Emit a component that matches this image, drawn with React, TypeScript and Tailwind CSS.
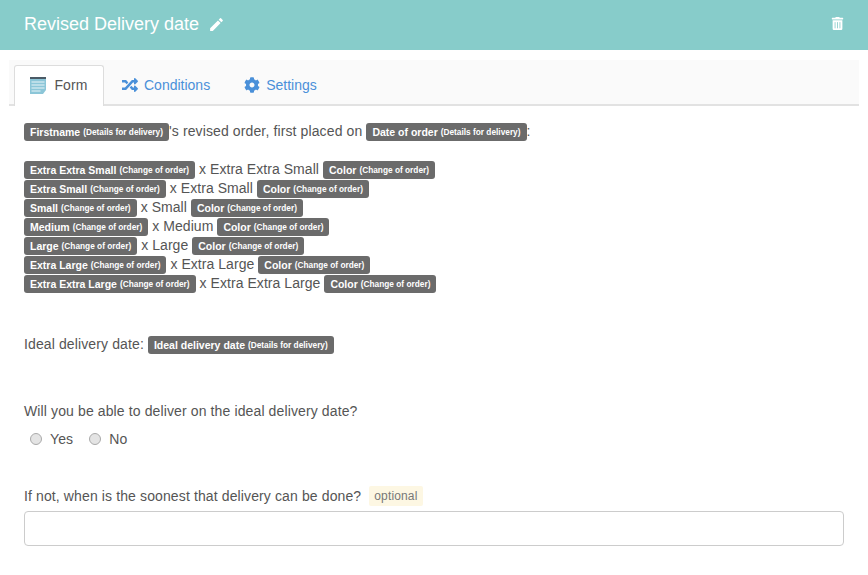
import React from 'react'
import { FaRandom, FaCog, FaTrashAlt } from 'react-icons/fa'
import { MdEdit } from 'react-icons/md'

const sizes = ['Extra Extra Small', 'Extra Small', 'Small', 'Medium', 'Large', 'Extra Large', 'Extra Extra Large']

const Tag = ({ name, group }: { name: string; group: string }) => (
  <span className="inline-flex h-[18px] items-center whitespace-nowrap rounded-[3px] bg-[#6b6b6b] px-[6px] pt-px text-[10.5px] font-bold leading-none tracking-normal text-white">
    {name}
    <span className="ml-[3px] text-[8.3px]">({group})</span>
  </span>
)

const FormIcon = () => (
  <svg width="16" height="17" viewBox="0 0 16 17">
    <rect x="0" y="0" width="16" height="2" fill="#4a5a66" />
    <path d="M0 2h16v11l-3 4H0z" fill="#8cc6d8" />
    <path d="M1.5 5h13M1.5 8h13M1.5 11h13M1.5 14h9" stroke="#eaf5f8" strokeWidth="1" />
  </svg>
)

export default function App() {
  return (
    <div className="h-[575px] w-[868px] overflow-hidden bg-white font-['Liberation_Sans',Arial,sans-serif] text-[14px] tracking-[0.12px] text-[#555]">
      <header className="flex h-[50px] items-center justify-between bg-[#87ccca] pl-6 pr-[24px] text-white">
        <div className="-mt-[2px] flex items-center gap-[9px]">
          <h1 className="text-[18px] font-normal tracking-normal">Revised Delivery date</h1>
          <MdEdit size={17} />
        </div>
        <FaTrashAlt size={13} className="-mt-[3px]" />
      </header>

      <nav className="mx-[9px] mt-[10px] flex h-[46px] items-end gap-px border-b-2 border-[#e2e2e2] bg-[#fafafa] pl-[5px]">
        <div className="-mb-[2px] flex h-[41px] w-[90px] items-center justify-center gap-2 rounded-t-[3px] border border-b-0 border-[#ddd] bg-white pb-[2px]">
          <FormIcon />
          <span>Form</span>
        </div>
        <div className="flex h-[39px] items-center gap-[6px] px-[17px] pt-px text-[#4a90d9]">
          <FaRandom size={16} />
          <span className="tracking-normal">Conditions</span>
        </div>
        <div className="flex h-[39px] items-center gap-[6px] pl-[16px] pt-px text-[#4a90d9]">
          <FaCog size={16} />
          <span className="tracking-normal">Settings</span>
        </div>
      </nav>

      <main className="px-6 pt-[16px]">
        <p className="flex h-[19px] items-center whitespace-pre">
          <Tag name="Firstname" group="Details for delivery" />
          <span>{"'s revised order, first placed on "}</span>
          <Tag name="Date of order" group="Details for delivery" />
          <span>:</span>
        </p>

        <div className="mt-[19px]">
          {sizes.map((size) => (
            <p key={size} className="flex h-[19px] items-center whitespace-pre">
              <Tag name={size} group="Change of order" />
              <span className="mx-[4px] tracking-[0.05px]">x {size}</span>
              <Tag name="Color" group="Change of order" />
            </p>
          ))}
        </div>

        <p className="mt-[42px] flex h-[19px] items-center gap-[4px]">
          <span>Ideal delivery date:</span>
          <Tag name="Ideal delivery date" group="Details for delivery" />
        </p>

        <p className="mt-[47px] leading-5">Will you be able to deliver on the ideal delivery date?</p>
        <div className="mt-[8px] flex h-5 items-center pl-[6px]">
          <span className="h-3 w-3 rounded-full border border-[#aaa] bg-[#e4e4e4]" />
          <span className="ml-2">Yes</span>
          <span className="ml-4 h-3 w-3 rounded-full border border-[#aaa] bg-[#e4e4e4]" />
          <span className="ml-2">No</span>
        </div>

        <div className="mt-[37px] flex h-5 items-center gap-2">
          <span>If not, when is the soonest that delivery can be done?</span>
          <span className="rounded-[2px] bg-[#fdf7e3] px-[5px] py-px text-[12px] tracking-[0.15px] text-[#777]">optional</span>
        </div>
        <input className="mt-[5px] block h-[35px] w-[820px] rounded-[4px] border border-[#ccc] bg-white" />
      </main>
    </div>
  )
}
